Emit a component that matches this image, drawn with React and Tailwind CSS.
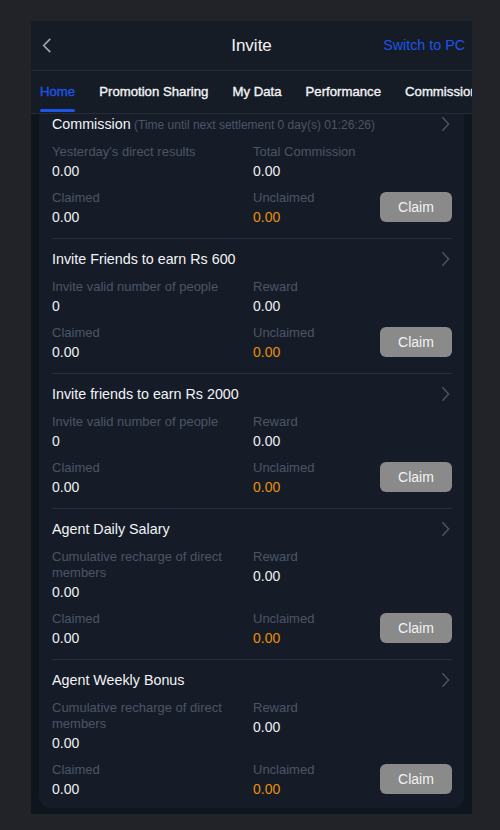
import React from "react";

const sections = [
  {
    title: "Commission",
    note: "(Time until next settlement 0 day(s) 01:26:26)",
    leftLabel: "Yesterday's direct results",
    leftValue: "0.00",
    rightLabel: "Total Commission",
    rightValue: "0.00",
    first: true,
  },
  {
    title: "Invite Friends to earn Rs 600",
    leftLabel: "Invite valid number of people",
    leftValue: "0",
    rightLabel: "Reward",
    rightValue: "0.00",
  },
  {
    title: "Invite friends to earn Rs 2000",
    leftLabel: "Invite valid number of people",
    leftValue: "0",
    rightLabel: "Reward",
    rightValue: "0.00",
  },
  {
    title: "Agent Daily Salary",
    leftLabel: "Cumulative recharge of direct members",
    leftValue: "0.00",
    rightLabel: "Reward",
    rightValue: "0.00",
  },
  {
    title: "Agent Weekly Bonus",
    leftLabel: "Cumulative recharge of direct members",
    leftValue: "0.00",
    rightLabel: "Reward",
    rightValue: "0.00",
    last: true,
  },
];

const tabs = ["Home", "Promotion Sharing", "My Data", "Performance", "Commission"];

const ChevronRight = ({ className }) => (
  <svg viewBox="0 0 10 18" className={className} fill="none" stroke="currentColor" strokeWidth="1.6">
    <path d="M1.5 1.5 L8.5 9 L1.5 16.5" />
  </svg>
);

const ChevronLeft = ({ className }) => (
  <svg viewBox="0 0 10 16" className={className} fill="none" stroke="currentColor" strokeWidth="1.8">
    <path d="M8.5 1 L1.5 8 L8.5 15" />
  </svg>
);

const Item = ({ label, value, orange }) => (
  <div>
    <div className="text-[13px] leading-4 text-[#4b5566]">{label}</div>
    <div className={`text-sm leading-[22px] ${orange ? "text-[#e8900c]" : "text-[#eef0f3]"}`}>{value}</div>
  </div>
);

const Section = ({ s }) => (
  <div className={`${s.first ? "" : "pt-[10px]"} ${s.last ? "pb-2" : "pb-[10px] border-b border-[#27303d]"}`}>
    <div className="flex items-center justify-between h-5">
      <div className="text-[14.3px] leading-5 text-[#f2f4f7] whitespace-nowrap">
        {s.title}
        {s.note && <span className="text-[12px] text-[#4b5566]"> {s.note}</span>}
      </div>
      <ChevronRight className="w-[9px] h-[16px] text-[#4b5566] mr-[2px]" />
    </div>
    <div className="grid grid-cols-[201px_1fr_72px] mt-[10px]">
      <div className="pr-3">
        <Item label={s.leftLabel} value={s.leftValue} />
      </div>
      <div>
        <Item label={s.rightLabel} value={s.rightValue} />
      </div>
      <div />
    </div>
    <div className="grid grid-cols-[201px_1fr_72px] mt-2 items-center">
      <Item label="Claimed" value="0.00" />
      <Item label="Unclaimed" value="0.00" orange />
      <button className="h-[30px] w-[72px] rounded-md bg-[#8a8a8a] text-sm text-[#f2f2f2] mt-[-4px]">
        Claim
      </button>
    </div>
  </div>
);

export default function App() {
  return (
    <div className="min-h-[830px] bg-[#222229] pt-[21px] pl-[31px] font-['Liberation_Sans',Arial,sans-serif]">
      <div className="w-[441px] h-[793px] bg-[#0f151d] overflow-hidden">
        <div className="h-[50px] bg-[#161c26] flex items-center justify-between px-[11px] relative border-b border-[#242c38]">
          <ChevronLeft className="w-[10px] h-[15px] text-[#9aa3af]" />
          <div className="absolute left-0 right-0 text-center text-[17px] text-[#f2f4f7] pointer-events-none">Invite</div>
          <div className="text-[14.3px] text-[#1d55e8] mr-[-4px]">Switch to PC</div>
        </div>
        <div className="h-[43px] bg-[#161c26] flex items-center gap-6 pl-[9px] border-b border-[#242c38] whitespace-nowrap overflow-hidden">
          {tabs.map((t, i) => (
            <div key={t} className="relative h-full flex items-center shrink-0">
              <span className={`text-[13.2px] [-webkit-text-stroke:0.35px_currentColor] ${i === 0 ? "text-[#1d55e8]" : "text-[#f2f4f7]"}`}>{t}</span>
              {i === 0 && <div className="absolute left-0 right-0 bottom-[1px] h-[3px] rounded-full bg-[#1d55e8]" />}
            </div>
          ))}
        </div>
        <div className="mx-[8px] bg-[#161c27] rounded-b-xl pl-[13px] pr-[12px]">
          {sections.map((s) => (
            <Section key={s.title} s={s} />
          ))}
        </div>
      </div>
    </div>
  );
}
